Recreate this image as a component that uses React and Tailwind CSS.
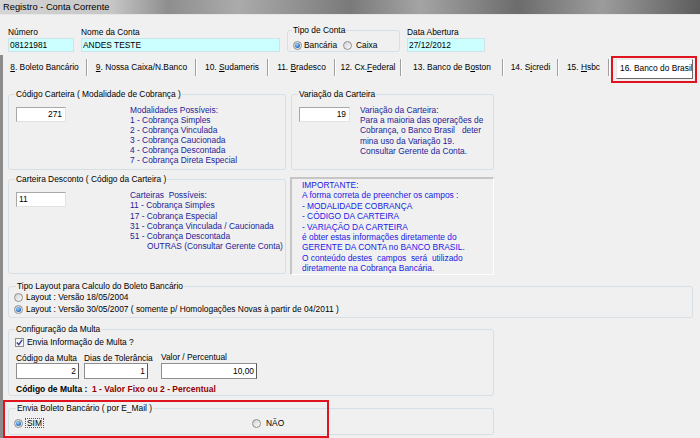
import React from "react";

function Radio({ checked }) {
  return (
    <span className="w-[9px] h-[9px] rounded-full border border-[#8e8f8f] bg-[linear-gradient(135deg,#d2d2d2,#fbfbfb)] flex items-center justify-center shrink-0">
      {checked ? (
        <span className="w-[5px] h-[5px] rounded-full bg-[radial-gradient(circle_at_40%_35%,#a6d8ff,#2a73c8_60%,#1b4f8e)]" />
      ) : null}
    </span>
  );
}

function Check() {
  return (
    <span className="w-[9px] h-[9px] border border-[#8e8f8f] bg-[#f6f6f6] flex items-center justify-center shrink-0">
      <svg width="7" height="7" viewBox="0 0 7 7">
        <path d="M0.8 3.6 L2.8 5.6 L6.2 0.9" stroke="#33449a" strokeWidth="1.4" fill="none" />
      </svg>
    </span>
  );
}

function Tab({ w, sep, children }) {
  return (
    <div className={"flex items-start h-[28px] pt-[4px] shrink-0 " + w}>
      {sep ? <div className="w-[2px] h-[17px] border-l border-[#a0a0a0] border-r border-r-white shrink-0" /> : null}
      <div className="flex-1 text-center leading-[17px] whitespace-nowrap">{children}</div>
    </div>
  );
}

export default function App() {
  return (
    <div className="w-[700px] h-[438px] bg-[#f0f0f0] overflow-hidden relative font-['Liberation_Sans',Arial,sans-serif] text-[8.4px] text-black">
      {/* Title bar */}
      <div className="h-[15px] border-b border-[#e6e6e6] bg-[linear-gradient(to_right,#d4d4d4_0%,#c6c6c6_16%,#8e8e8e_24%,#ababab_34%,#7a7a7a_50%,#a4a4a4_60%,#6c6c6c_74%,#9c9c9c_86%,#5c5c5c_100%)] pl-[3px] text-[9.3px] leading-[14px]">
        Registro - Conta Corrente
      </div>

      {/* Top fields */}
      <div className="h-[40px] flex items-start pl-[8px] gap-[7px]">
        <div className="flex flex-col pt-[12px]">
          <div className="leading-[10px] h-[10px]">Número</div>
          <div className="mt-[1px] w-[66px] h-[14px] bg-[#ccffff] border border-[#cfe3e6] pl-[1px] leading-[12px]">08121981</div>
        </div>
        <div className="flex flex-col pt-[12px]">
          <div className="leading-[10px] h-[10px]">Nome da Conta</div>
          <div className="mt-[1px] w-[199px] h-[14px] bg-[#ccffff] border border-[#cfe3e6] pl-[1px] leading-[12px]">ANDES TESTE</div>
        </div>
        <fieldset className="mt-[10px] w-[113px] h-[27px] border border-[#d5dfe5] rounded-[3px] pl-[4px] pt-[5px] min-w-0">
          <legend className="leading-[10px] px-[1px]">Tipo de Conta</legend>
          <div className="flex items-center h-[10px] ml-[1px]">
            <div className="flex items-center gap-[2px] w-[50px]">
              <Radio checked />
              <span>Bancária</span>
            </div>
            <div className="flex items-center gap-[4px]">
              <Radio />
              <span>Caixa</span>
            </div>
          </div>
        </fieldset>
        <div className="flex flex-col pt-[12px]">
          <div className="leading-[10px] h-[10px]">Data Abertura</div>
          <div className="mt-[1px] w-[78px] h-[14px] bg-[#ccffff] border border-[#cfe3e6] pl-[1px] leading-[12px]">27/12/2012</div>
        </div>
      </div>

      {/* Tab control */}
      <div className="border-l-[3px] border-[#8c8c8c] h-[383px]">
        <div className="flex h-[28px]">
          <Tab w="w-[83px]"><u>8</u>. Boleto Bancário</Tab>
          <Tab w="w-[109px]" sep><u>9</u>. Nossa Caixa/N.Banco</Tab>
          <Tab w="w-[72px]" sep>10. <u>S</u>udameris</Tab>
          <Tab w="w-[67px]" sep>11. <u>B</u>radesco</Tab>
          <Tab w="w-[66px]" sep>12. Cx.<u>F</u>ederal</Tab>
          <Tab w="w-[102px]" sep>13. Banco de B<u>o</u>ston</Tab>
          <Tab w="w-[55px]" sep>14. S<u>i</u>credi</Tab>
          <Tab w="w-[51px]" sep>15. <u>H</u>sbc</Tab>
          <div className="flex items-start h-[28px] pt-[4px] w-[89px] shrink-0">
            <div className="w-[2px] h-[17px] border-l border-[#a0a0a0] border-r border-r-white shrink-0" />
            <div className="ml-[6px] w-[77px] h-[20px] bg-white border border-[#e8e8e8] border-r-[#6a6a6a] border-b-[#6a6a6a] pl-[3px] pt-[1px] leading-[14px] whitespace-nowrap overflow-hidden">
              16. Banco do Brasil
            </div>
          </div>
        </div>

        <div className="pl-[5px]">
          {/* Row 1 */}
          <div className="mt-[6px] flex gap-[5px] items-start">
            <fieldset className="w-[278px] h-[81px] border border-[#d5dfe5] rounded-[3px] pl-[6px] pt-[6px] min-w-0">
              <legend className="leading-[10px] px-[1px]">Código Carteira ( Modalidade de Cobrança )</legend>
              <div className="flex items-start">
                <div className="ml-[1px] mt-[2px] w-[50px] h-[15px] bg-white border border-[#a8a8a8] border-r-[#e2e2e2] border-b-[#e2e2e2] text-right pr-[3px] leading-[13px] shrink-0">271</div>
                <div className="ml-[64px] text-[#1e1e96] leading-[10px] whitespace-nowrap">
                  <div>Modalidades Possíveis:</div>
                  <div>1 - Cobrança Simples</div>
                  <div>2 - Cobrança Vinculada</div>
                  <div>3 - Cobrança Caucionada</div>
                  <div>4 - Cobrança Descontada</div>
                  <div>7 - Cobrança Direta Especial</div>
                </div>
              </div>
            </fieldset>
            <fieldset className="w-[203px] h-[81px] border border-[#d5dfe5] rounded-[3px] pl-[6px] pt-[6px] min-w-0">
              <legend className="leading-[10px] px-[1px]">Variação da Carteira</legend>
              <div className="flex items-start">
                <div className="ml-[1px] mt-[2px] w-[51px] h-[15px] bg-white border border-[#a8a8a8] border-r-[#e2e2e2] border-b-[#e2e2e2] text-right pr-[3px] leading-[13px] shrink-0">19</div>
                <div className="ml-[10px] text-[#1e1e96] leading-[10.2px] whitespace-pre">
                  <div>Variação da Carteira:</div>
                  <div>Para a maioria das operações de</div>
                  <div>Cobrança, o Banco Brasil   deter</div>
                  <div>mina uso da Variação 19.</div>
                  <div>Consultar Gerente da Conta.</div>
                </div>
              </div>
            </fieldset>
          </div>

          {/* Row 2 */}
          <div className="mt-[4px] flex gap-[4px] items-start">
            <fieldset className="w-[278px] h-[100px] border border-[#d5dfe5] rounded-[3px] pl-[6px] pt-[6px] min-w-0">
              <legend className="leading-[10px] px-[1px]">Carteira Desconto ( Código da Carteira )</legend>
              <div className="flex items-start">
                <div className="ml-[1px] mt-[2px] w-[50px] h-[15px] bg-white border border-[#a8a8a8] border-r-[#e2e2e2] border-b-[#e2e2e2] pl-[2px] leading-[13px] shrink-0">11</div>
                <div className="ml-[64px] text-[#1e1e96] leading-[10.3px] whitespace-pre">
                  <div>Carteiras  Possíveis:</div>
                  <div>11 - Cobrança Simples</div>
                  <div>17 - Cobrança Especial</div>
                  <div>31 - Cobrança Vinculada / Caucionada</div>
                  <div>51 - Cobrança Descontada</div>
                  <div className="pl-[17px]">OUTRAS (Consultar Gerente Conta)</div>
                </div>
              </div>
            </fieldset>
            <div className="mt-[3px] w-[204px] h-[98px] border-t-[2px] border-l-[2px] border-[#c6c6c6] border-r border-b border-r-white border-b-white pl-[10px] pt-[1px] text-[#1a1ae6] leading-[10.4px] whitespace-pre">
              <div>IMPORTANTE:</div>
              <div>A forma correta de preencher os campos :</div>
              <div>- MODALIDADE COBRANÇA</div>
              <div>- CÓDIGO DA CARTEIRA</div>
              <div>- VARIAÇÃO DA CARTEIRA</div>
              <div>é obter estas informações diretamente do</div>
              <div>GERENTE DA CONTA no BANCO BRASIL.</div>
              <div>O conteúdo destes  campos  será  utilizado</div>
              <div>diretamente na Cobrança Bancária.</div>
            </div>
          </div>

          {/* Row 3: layout */}
          <fieldset className="mt-[6px] w-[685px] h-[37px] border border-[#d5dfe5] rounded-[3px] pl-[5px] min-w-0">
            <legend className="leading-[10px] ml-[2px] px-[1px]">Tipo Layout para Calculo do Boleto Bancário</legend>
            <div className="flex items-center gap-[3px] h-[12px]">
              <Radio />
              <span>Layout : Versão 18/05/2004</span>
            </div>
            <div className="flex items-center gap-[3px] h-[12px]">
              <Radio checked />
              <span>Layout : Versão 30/05/2007 ( somente p/ Homologações Novas à partir de 04/2011 )</span>
            </div>
          </fieldset>

          {/* Row 4: multa */}
          <fieldset className="mt-[6px] w-[486px] h-[72px] border border-[#d5dfe5] rounded-[3px] pl-[6px] pt-[3px] min-w-0">
            <legend className="leading-[10px] px-[1px]">Configuração da Multa</legend>
            <div className="flex items-center gap-[3px] h-[10px]">
              <Check />
              <span>Envia Informação de Multa ?</span>
            </div>
            <div className="mt-[7px] flex items-start ml-[1px]">
              <div className="flex flex-col w-[63px]">
                <div className="leading-[9px] h-[9px] whitespace-nowrap">Código da Multa</div>
                <div className="h-[16px] bg-white border border-[#8f8f8f] border-r-[#5a5a5a] text-right pr-[2px] leading-[14px]">2</div>
              </div>
              <div className="flex flex-col w-[64px] ml-[5px]">
                <div className="leading-[9px] h-[9px] whitespace-nowrap">Dias de Tolerância</div>
                <div className="h-[16px] bg-white border border-[#8f8f8f] border-r-[#5a5a5a] text-right pr-[2px] leading-[14px]">1</div>
              </div>
              <div className="flex flex-col w-[96px] ml-[13px]">
                <div className="leading-[7px] h-[9px] whitespace-nowrap">Valor / Percentual</div>
                <div className="h-[16px] bg-white border border-[#8f8f8f] border-r-[#5a5a5a] text-right pr-[2px] leading-[14px]">10,00</div>
              </div>
            </div>
            <div className="mt-[5px] ml-[1px] leading-[10px] font-bold text-[8.5px] whitespace-pre">
              <span>Código de Multa :  </span>
              <span className="text-[#900000]">1 - Valor Fixo ou 2 - Percentual</span>
            </div>
          </fieldset>

          {/* Row 5: email */}
          <fieldset className="mt-[7px] w-[486px] h-[32px] border border-[#d5dfe5] rounded-[3px] pl-[5px] pt-[5px] min-w-0">
            <legend className="leading-[10px] ml-[2px] px-[1px]">Envia Boleto Bancário ( por E_Mail )</legend>
            <div className="flex items-center h-[10px]">
              <div className="flex items-center gap-[2px] w-[238px]">
                <Radio checked />
                <span className="border border-dotted border-[#555] px-[1px] leading-[8px]">SIM</span>
              </div>
              <div className="flex items-center gap-[5px]">
                <Radio />
                <span>NÃO</span>
              </div>
            </div>
          </fieldset>
        </div>
      </div>

      {/* Red annotation boxes */}
      <div className="absolute left-[611px] top-[56px] w-[86px] h-[27px] border-2 border-[#e0141e]" />
      <div className="absolute left-[3px] top-[400px] w-[326px] h-[38px] border-2 border-[#e0141e]" />
    </div>
  );
}
